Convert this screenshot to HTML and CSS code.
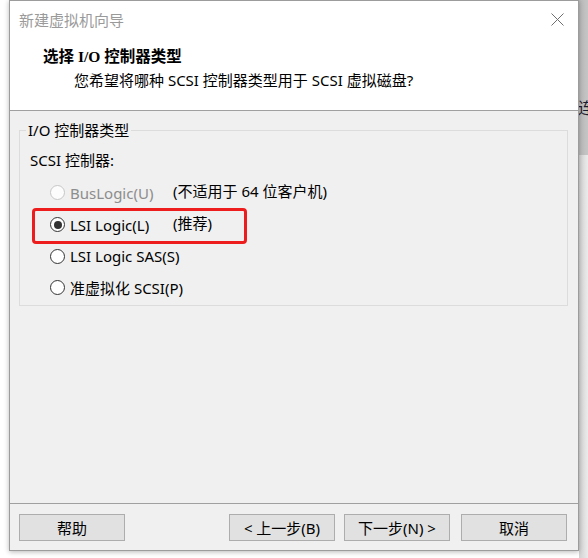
FILE: index.html
```html
<!DOCTYPE html>
<html lang="zh-CN">
<head>
<meta charset="utf-8">
<title>新建虚拟机向导</title>
<link rel="stylesheet" href="styles.css">
</head>
<body>
<div class="screen">
  <div class="gutter"></div>
  <div class="dialog">
    <div class="header">
      <div class="titlebar">
        <span class="title">新建虚拟机向导</span>
        <svg class="close" width="13" height="13" viewBox="0 0 13 13"><path d="M0.5 0.5 L12.5 12.5 M12.5 0.5 L0.5 12.5" stroke="#6f6f6f" stroke-width="1" fill="none"/></svg>
      </div>
      <div class="heading">选择 I/O 控制器类型</div>
      <div class="subtitle">您希望将哪种 SCSI 控制器类型用于 SCSI 虚拟磁盘?</div>
    </div>
    <div class="body">
      <fieldset class="group">
        <legend class="legend">I/O 控制器类型</legend>
        <div class="label">SCSI 控制器:</div>
        <div class="row disabled">
          <span class="opt"><span class="radio"></span><span class="opt-text">BusLogic(U)</span></span>
          <span class="note">(不适用于 64 位客户机)</span>
        </div>
        <div class="row">
          <span class="opt"><span class="radio checked"></span><span class="opt-text">LSI Logic(L)</span></span>
          <span class="note">(推荐)</span>
          <span class="highlight"></span>
        </div>
        <div class="row">
          <span class="opt"><span class="radio"></span><span class="opt-text">LSI Logic SAS(S)</span></span>
        </div>
        <div class="row">
          <span class="opt"><span class="radio"></span><span class="opt-text">准虚拟化 SCSI(P)</span></span>
        </div>
      </fieldset>
    </div>
    <div class="footer">
      <button class="btn">帮助</button>
      <div class="spacer"></div>
      <button class="btn">&lt; 上一步(B)</button>
      <button class="btn">下一步(N) &gt;</button>
      <button class="btn cancel">取消</button>
    </div>
  </div>
  <div class="backdrop">
    <div class="bd-top"><span class="bd-char">连</span></div>
    <div class="bd-bottom"></div>
  </div>
</div>
</body>
</html>
```
FILE: styles.css
```css
html, body {
  margin: 0;
  padding: 0;
  background: #ffffff;
}
body {
  width: 588px;
  height: 558px;
  overflow: hidden;
  font-family: "Noto Sans", "Noto Sans CJK SC", sans-serif;
  font-size: 15px;
  color: #000;
}
.screen {
  display: flex;
  height: 558px;
}
.gutter {
  width: 9px;
  flex: none;
  background: #ffffff;
}
.dialog {
  width: 568px;
  height: 549px;
  flex: none;
  border: 1px solid #9c9c9c;
  background: #f0f0f0;
  box-shadow: 0 1px 5px rgba(0, 0, 0, 0.28);
  display: flex;
  flex-direction: column;
  position: relative;
  z-index: 2;
}
.header {
  height: 109px;
  background: #ffffff;
  border-bottom: 1px solid #a0a0a0;
  flex: none;
}
.titlebar {
  height: 38px;
  display: flex;
  align-items: center;
  justify-content: space-between;
  padding: 0 14px 0 9px;
}
.title {
  font-size: 15px;
  color: #9a9a9a;
  line-height: 20px;
}
.close {
  display: block;
  margin-top: -2px;
}
.heading {
  margin-top: 8px;
  padding-left: 33px;
  font-family: "Liberation Serif", "Noto Sans CJK SC", serif;
  font-weight: bold;
  font-size: 15.5px;
  line-height: 20px;
}
.subtitle {
  margin-top: 3px;
  padding-left: 64px;
  line-height: 20px;
}
.body {
  flex: 1;
  padding: 10px 10px 0 9px;
}
.group {
  margin: 0;
  padding: 0 0 1px 0;
  border: 1px solid #dcdcdc;
  min-width: 0;
}
.legend {
  margin-left: 6px;
  padding: 0 2px;
  line-height: 18px;
}
.label {
  padding: 11px 0 0 10px;
  line-height: 20px;
}
.row {
  position: relative;
  display: flex;
  align-items: center;
  height: 31.7px;
  padding-left: 30px;
}
.label + .row {
  margin-top: 7px;
}
.opt {
  width: 123px;
  display: flex;
  align-items: center;
  flex: none;
}
.radio {
  width: 13px;
  height: 13px;
  border: 1px solid #333333;
  border-radius: 50%;
  background: #ffffff;
  flex: none;
  position: relative;
}
.radio.checked::after {
  content: "";
  position: absolute;
  left: 2.5px;
  top: 2.5px;
  width: 8px;
  height: 8px;
  border-radius: 50%;
  background: #333333;
}
.opt-text {
  margin-left: 5px;
  white-space: nowrap;
  line-height: 20px;
}
.note {
  white-space: nowrap;
  line-height: 20px;
  margin-top: -3px;
}
.disabled .radio {
  border-color: #c6c6c6;
  background: #fcfcfc;
}
.disabled .opt-text {
  color: #8d8d8d;
}
.highlight {
  position: absolute;
  left: 12px;
  top: -1px;
  width: 209px;
  height: 30px;
  border: 3px solid #ee1d1d;
  border-radius: 4px;
}
.footer {
  flex: none;
  border-top: 1px solid #a0a0a0;
  display: flex;
  align-items: flex-start;
  padding: 10px 11px 0 9px;
  box-sizing: border-box;
  height: 47px;
}
.spacer {
  flex: 1;
}
.btn {
  width: 106px;
  height: 27px;
  background: #e1e1e1;
  border: 1px solid #adadad;
  font-family: "Noto Sans", "Noto Sans CJK SC", sans-serif;
  font-size: 15px;
  line-height: 20px;
  padding: 0;
  color: #000;
  margin-left: 9px;
}
.btn:first-child {
  margin-left: 0;
}
.btn.cancel {
  margin-left: 11px;
}
.backdrop {
  flex: 1;
  display: flex;
  flex-direction: column;
  position: relative;
  z-index: 1;
}
.bd-top {
  height: 155px;
  background: linear-gradient(to right, #b9b9b9, #cdcdcd);
  overflow: hidden;
  position: relative;
}
.bd-char {
  display: block;
  margin-top: 97px;
  margin-left: -1px;
  font-family: "Noto Sans CJK SC", sans-serif;
  font-size: 16px;
  line-height: 20px;
  color: #1a1a2e;
}
.bd-bottom {
  flex: 1;
  background: linear-gradient(to right, #d2d2d2, #ebebeb 60%, #f2f2f2);
}
```
